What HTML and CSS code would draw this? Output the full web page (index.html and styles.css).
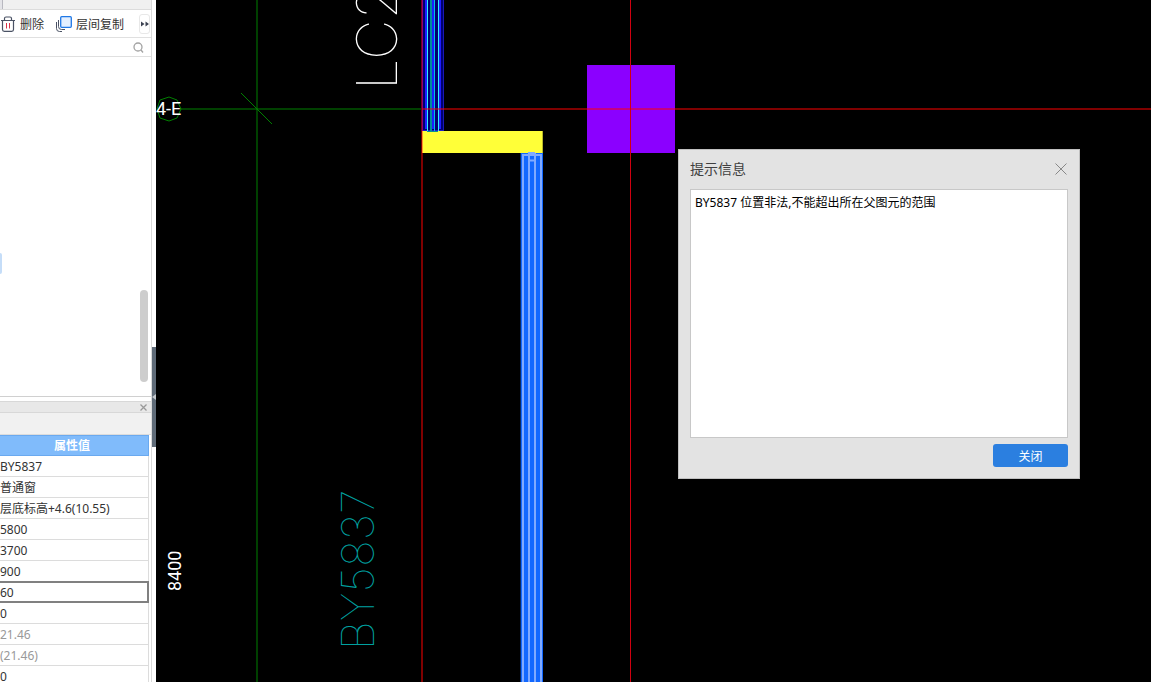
FILE: index.html
```html
<!DOCTYPE html>
<html lang="zh-CN">
<head>
<meta charset="utf-8">
<title>提示信息</title>
<link rel="stylesheet" href="styles.css">
</head>
<body>
<div class="app">
  <aside class="side">
    <div class="panels">
      <div class="tabstrip"><span class="tab-edge"></span></div>
      <div class="toolbar">
        <button class="tool" type="button">
          <svg width="16" height="16" viewBox="0 0 16 16" fill="none" stroke="#4a5264"><path d="M1 4.500H15M4.500 4V2.500Q4.500 1 6 1H10Q11.500 1 11.500 2.500V4M2.500 4.500V13.500Q2.500 15.300 4.300 15.300H11.700Q13.500 15.300 13.500 13.500V4.500" stroke-width="1.200"/><path d="M6.500 7V12.500M9.500 7V12.500" stroke="#d9344a"/></svg>
          <span>删除</span>
        </button>
        <button class="tool copy" type="button">
          <svg width="16" height="16" viewBox="0 0 16 16" fill="none" stroke="#4a5264"><path d="M.5 6V12.500Q.5 15.500 3.500 15.500H6M2.500 4V10.500Q2.500 13.500 5.500 13.500H9"/><rect x="4.700" y=".7" width="10.600" height="10.600" rx="1" fill="#e3efff" stroke="#1f78e6" stroke-width="1.300"/></svg>
          <span>层间复制</span>
        </button>
        <button class="more" type="button" aria-label="更多"><svg width="8" height="6" viewBox="0 0 8 6" fill="#3d4352"><path d="M0 .5L3.500 3L0 5.500ZM4.500 .5L8 3L4.500 5.500Z"/></svg></button>
      </div>
      <div class="search">
        <button class="plain" type="button" aria-label="搜索"><svg width="12" height="12" viewBox="0 0 12 12" fill="none" stroke="#a3a3a3" stroke-width="1.300"><circle cx="6" cy="6" r="4"/><path d="M9 9L11 11.500"/></svg></button>
      </div>
      <div class="tree"><span class="selected-node"></span><span class="thumb"></span></div>
      <div class="prop-title"><button class="plain" type="button" aria-label="关闭属性"><svg width="7" height="7" viewBox="0 0 7 7" stroke="#999" stroke-width="1.300"><path d="M.5 .5L6.500 6.500M6.500 .5L.5 6.500"/></svg></button></div>
      <div class="prop-bar"></div>
      <table class="props">
        <thead><tr><th scope="col">属性值</th></tr></thead>
        <tbody>
          <tr><td>BY5837</td></tr>
          <tr><td>普通窗</td></tr>
          <tr><td>层底标高+4.6(10.55)</td></tr>
          <tr><td>5800</td></tr>
          <tr><td>3700</td></tr>
          <tr><td>900</td></tr>
          <tr class="current"><td>60</td></tr>
          <tr><td>0</td></tr>
          <tr class="dim"><td>21.46</td></tr>
          <tr class="dim"><td>(21.46)</td></tr>
          <tr><td>0</td></tr>
        </tbody>
      </table>
    </div>
    <div class="splitter"><button class="grip" type="button" aria-label="收起"><svg width="4" height="6" viewBox="0 0 4 6" fill="#c3c8cd"><path d="M4 0V6L0 3Z"/></svg></button></div>
  </aside>
  <main class="canvas">
    <svg class="drawing" width="100%" height="100%">
      <g transform="translate(-156 0)">
        <g stroke="#008000" fill="none">
          <path d="M180 109H422M257 0V3000"/>
          <path d="M241 93L272 124"/>
          <path d="M169 97L177 100L181 109L177 118L169 121L160 118L157 109L160 100Z"/>
        </g>
        <g>
          <rect x="422" y="0" width="22" height="131" fill="#00006e"/>
          <path d="M426 0V129M433 0V129M440 0V129" stroke="#1c1cff" stroke-width="2"/>
          <path d="M443.500 0V131" stroke="#1818b8"/>
          <path d="M423 130.500H443" stroke="#1c1cc8"/>
          <path d="M431 0V131" stroke="#008c9c" stroke-width="2"/>
          <path d="M427.500 0V131M438.500 0V131" stroke="#30f0ff"/>
          <path d="M434.500 0V131" stroke="#00c0e0"/>
          <path d="M422.500 0V131" stroke="#900078"/>
        </g>
        <rect x="587" y="65" width="88" height="88" fill="#8b00ff"/>
        <path d="M422 109H4000M422 131V3000" stroke="#f00"/>
        <path d="M421.500 0V131" stroke="#700020"/>
        <path d="M630.500 0V3000" stroke="#d00010"/>
        <rect x="422" y="131" width="121" height="22" fill="#ffff38"/>
        <path d="M422.500 131V153" stroke="#ff9428"/>
        <path d="M542.500 131V153" stroke="#b8b828"/>
        <path d="M427 131.500H438" stroke="#109090"/>
        <rect x="521" y="153" width="22" height="3000" fill="#1268ff"/>
        <path d="M520.500 153V3000" stroke="#062a66"/>
        <path d="M523 3000V155H541V3000M529 153V3000M535 153V3000M528 153H535M529 160.500H535" fill="none" stroke="#80aaff" stroke-width="2"/>
        <text class="axis" x="156" y="115">4-E</text>
        <text class="axis" transform="translate(181 591) rotate(-90)">8400</text>
        <text class="cad window-name" transform="translate(374 650) rotate(-90)">BY5837</text>
        <text class="cad window-type" transform="translate(397 90) rotate(-90)">LC2</text>
      </g>
    </svg>
    <section class="dialog" role="dialog" aria-labelledby="dlg-title">
      <header class="dialog-head">
        <h1 id="dlg-title">提示信息</h1>
        <button class="plain" type="button" aria-label="关闭窗口"><svg width="12" height="12" viewBox="0 0 12 12" stroke="#888"><path d="M.5 .5L11.500 11.500M11.500 .5L.5 11.500"/></svg></button>
      </header>
      <div class="message">BY5837 位置非法,不能超出所在父图元的范围</div>
      <footer><button class="close" type="button">关闭</button></footer>
    </section>
  </main>
</div>
</body>
</html>
```
FILE: styles.css
```css
* { box-sizing: border-box; }
body {
  margin: 0;
  font: 12px/20px "Noto Sans", "Noto Sans CJK SC", sans-serif;
  color: #333;
  background: #000;
}
button { font: inherit; color: inherit; padding: 0; border: 0; background: none; }
svg { display: block; flex: none; }
.app { display: flex; height: 100vh; overflow: hidden; }
.side { display: flex; flex: none; width: 156px; background: #fff; }
.panels { display: flex; flex-direction: column; flex: 1; min-width: 0; border-right: 1px solid #d9d9d9; }
.tabstrip { display: flex; flex: none; height: 10px; background: #f0f0f0; border-bottom: 1px solid #dcdcdc; }
.tab-edge { width: 3px; background: #e4e4e8; border-right: 1px solid #b8b8c0; }
.toolbar { display: flex; flex: none; align-items: center; height: 28px; border-bottom: 1px solid #e0e0e0; }
.tool { display: flex; flex: none; align-items: center; gap: 4px; white-space: nowrap; }
.tool span { padding-top: 2px; }
.copy { margin-left: 12px; }
.more { display: flex; flex: none; align-items: center; justify-content: center; width: 11px; height: 20px; margin-left: auto; margin-right: 1px; border: 1px solid #e8e8e8; border-radius: 3px; }
.search { display: flex; flex: none; align-items: center; justify-content: flex-end; height: 19px; padding-right: 7px; border-bottom: 1px solid #e0e0e0; }
.tree { position: relative; flex: none; height: 340px; border-bottom: 1px solid #d0d0d0; }
.selected-node { position: absolute; left: 0; top: 196px; width: 2px; height: 21px; background: #c5ddf8; border-radius: 0 2px 2px 0; }
.thumb { position: absolute; right: 3px; top: 233px; width: 8px; height: 92px; border-radius: 4px; background: #cdcdcd; }
.prop-title { display: flex; flex: none; align-items: center; justify-content: flex-end; height: 12px; margin-top: 4px; padding-right: 4px; background: #e8e8e8; border: solid #d8d8d8; border-width: 1px 0; }
.prop-bar { flex: none; height: 22px; background: #f1f1f1; border-bottom: 1px solid #dcdcdc; }
.props { width: 149px; border-collapse: separate; border-spacing: 0; }
.props th { height: 21px; padding: 0 4px 0 0; line-height: 19px; color: #fff; background: #80bbfb; border: solid #6aa9ef; border-width: 1px 1px 1px 0; font-weight: 700; text-align: center; }
.props td { height: 21px; padding: 2px 0 0; line-height: 18px; border: solid #dcdcdc; border-width: 0 1px 1px 0; white-space: nowrap; }
.props .dim td { color: #999; }
.props .current td { border-bottom-color: #808080; box-shadow: inset 0 1px #808080, inset -1px -1px #808080, 0 -1px #808080; border-right-color: #808080; }
.splitter { display: flex; flex: none; width: 4px; padding-top: 347px; }
.grip { display: flex; align-items: center; width: 4px; height: 100px; background: #5f6b78; }
.canvas { position: relative; flex: 1; min-width: 0; background: #000; }
.drawing { position: absolute; inset: 0; }
.axis { font-family: Roboto, sans-serif; font-size: 18px; fill: #fff; }
.cad { font-family: Inter, sans-serif; font-weight: 100; }
.window-name { font-size: 45px; fill: #00a0a0; }
.window-type { font-size: 56px; fill: #fff; }
.dialog { position: absolute; left: 522px; top: 149px; display: flex; flex-direction: column; width: 402px; padding: 0 11px 11px; background: #e3e3e3; border: 1px solid #c0c0c0; }
.dialog-head { display: flex; align-items: center; justify-content: space-between; height: 39px; padding: 0 1px 2px 0; }
.dialog-head h1 { margin: 0; font-size: 14px; font-weight: 400; color: #404040; }
.message { height: 249px; padding: 3px 4px; color: #000; background: #fff; border: 1px solid #c8c8c8; }
footer { display: flex; justify-content: flex-end; padding-top: 6px; }
.close { width: 75px; height: 23px; padding-top: 2px; border-radius: 3px; color: #fff; background: #2b7fe0; }
```
